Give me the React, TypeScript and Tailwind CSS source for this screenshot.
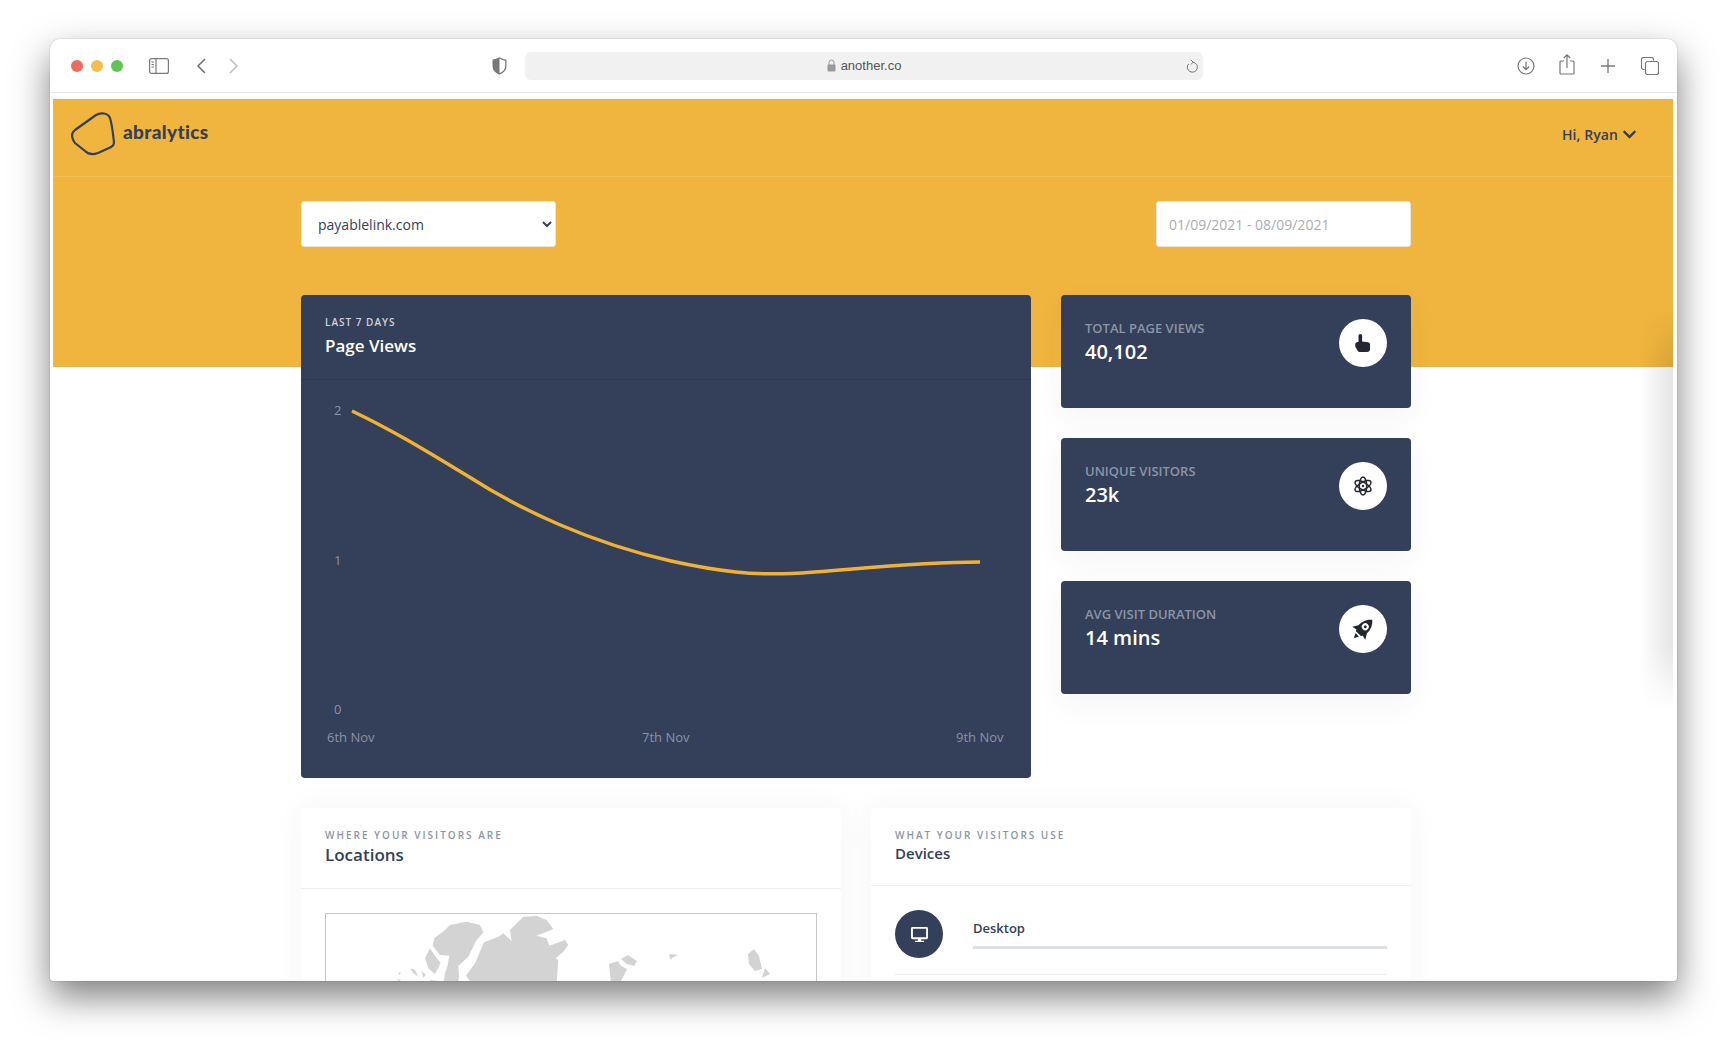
import { FaChevronDown, FaDesktop } from "react-icons/fa";
import type { ReactNode } from "react";

const FONT = "font-['Open_Sans',sans-serif]";

function ToolbarIcons() {
  return (
    <div className="flex h-[54px] items-center border-b border-[#e6e6e6] bg-white">
      <div className="ml-[21px] flex gap-2">
        <span className="h-3 w-3 rounded-full bg-[#ee6a5f]" />
        <span className="h-3 w-3 rounded-full bg-[#f5bd4f]" />
        <span className="h-3 w-3 rounded-full bg-[#61c454]" />
      </div>
      <svg className="ml-[26px]" width="20" height="16" viewBox="0 0 20 16" fill="none" stroke="#7a7a7a" strokeWidth="1.2">
        <rect x="0.6" y="0.6" width="18.8" height="14.8" rx="2" />
        <path d="M7 1v14M2.5 4h2.5M2.5 6.5h2.5M2.5 9h2.5" />
      </svg>
      <svg className="ml-[27px]" width="10" height="16" viewBox="0 0 10 16" fill="none" stroke="#6f6f6f" strokeWidth="1.5">
        <path d="M9 1 2 8l7 7" />
      </svg>
      <svg className="ml-[23px]" width="10" height="16" viewBox="0 0 10 16" fill="none" stroke="#bdbdbd" strokeWidth="1.5">
        <path d="m1 1 7 7-7 7" />
      </svg>
      <svg className="ml-[253px]" width="15" height="18" viewBox="0 0 14 17">
        <path d="M7 1c2 1.2 4 1.8 6 1.900v5.600c0 3.500-2.500 6-6 7.500C3.500 14.500 1 12 1 8.500V2.900C3 2.800 5 2.200 7 1Z" fill="#fff" stroke="#777" strokeWidth="1.2" />
        <path d="M7 1C5 2.200 3 2.800 1 2.900v5.600c0 3.500 2.500 6 6 7.500Z" fill="#777" />
      </svg>
      <div className="relative ml-[18px] flex h-7 w-[678px] items-center justify-center rounded-md bg-[#f1f1f1]">
        <svg className="mr-[5px]" width="9" height="13" viewBox="0 0 9 13">
          <path d="M2 6V3.500a2.500 2.500 0 0 1 5 0V6" fill="none" stroke="#9a9a9a" strokeWidth="1" />
          <rect x="0.500" y="5.500" width="8" height="7" rx="1" fill="#9a9a9a" />
        </svg>
        <span className="font-['Liberation_Sans',sans-serif] text-[13px] text-[#555]">another.co</span>
        <svg className="absolute right-[5px] top-[7px]" width="12" height="15" viewBox="0 0 12 15" fill="none" stroke="#777" strokeWidth="1">
          <path d="M7 3.200A5 5 0 1 1 2.500 5" />
          <path d="M4.800 0.800 7.200 3.200 4.800 5.500" />
        </svg>
      </div>
      <svg className="ml-[314px]" width="18" height="18" viewBox="0 0 18 18" fill="none" stroke="#777" strokeWidth="1.200">
        <circle cx="9" cy="9" r="8" />
        <path d="M9 4.500v8M5.800 9.500 9 12.700l3.200-3.200" />
      </svg>
      <svg className="ml-[24px] -mt-[3px]" width="16" height="21" viewBox="0 0 16 21" fill="none" stroke="#777" strokeWidth="1.200">
        <path d="M5 7H2a1 1 0 0 0-1 1v11a1 1 0 0 0 1 1h12a1 1 0 0 0 1-1V8a1 1 0 0 0-1-1h-3" />
        <path d="M8 14V1M4.800 4 8 .9 11.200 4" />
      </svg>
      <svg className="ml-[26px]" width="14" height="14" viewBox="0 0 14 14" fill="none" stroke="#777" strokeWidth="1.300">
        <path d="M7 0v14M0 7h14" />
      </svg>
      <svg className="ml-[26px]" width="18" height="18" viewBox="0 0 18 18" fill="none" stroke="#777" strokeWidth="1.200">
        <path d="M3.500 12.500H2.500a2 2 0 0 1-2-2V2.500a2 2 0 0 1 2-2h8a2 2 0 0 1 2 2v1" />
        <rect x="4.500" y="4.500" width="13" height="13" rx="2" />
      </svg>
    </div>
  );
}

function Logo() {
  return (
    <div className="flex items-center">
      <svg width="44" height="44" viewBox="0 0 44 44" fill="none" stroke="#34405a" strokeWidth="2.200">
        <path d="M1.500 26C.5 23 1.500 20 4 18L25 3C30 0 37 1 39 6C41 12 42 22 43 30C43 33 41 35 38 36L27 41C22 43 17 42 14 39L4 31C3 30 2 28 1.500 26Z" />
      </svg>
      <span className="ml-[8px] -mt-[4px] font-['Lato',sans-serif] text-[19px] font-black tracking-[0.35px] text-[#34405a]">abralytics</span>
    </div>
  );
}

function HandIcon() {
  return (
    <svg width="16" height="19" viewBox="0 0 16 19" fill="#23272f">
      <path d="M3.500 1.800a1.800 1.800 0 0 1 3.600 0V7.500l6 .8a2.200 2.200 0 0 1 1.900 2.200V15a3 3 0 0 1-3 3H4.500a2 2 0 0 1-1.500-.7L.7 13.500C-.2 12 0 8.800 1.700 8.300l1.800-.5Z" />
    </svg>
  );
}

function AtomIcon() {
  return (
    <svg width="20" height="20" viewBox="0 0 20 20" fill="none" stroke="#23272f" strokeWidth="1.500">
      <ellipse cx="10" cy="10" rx="3.700" ry="9" />
      <ellipse cx="10" cy="10" rx="3.700" ry="9" transform="rotate(60 10 10)" />
      <ellipse cx="10" cy="10" rx="3.700" ry="9" transform="rotate(-60 10 10)" />
      <circle cx="10" cy="10" r="1.200" fill="#23272f" stroke="none" />
    </svg>
  );
}

function RocketIcon() {
  return (
    <svg width="26" height="26" viewBox="0 0 24 24">
      <g transform="rotate(45 12 12)">
        <path d="M12 0C16.500 3.500 17.500 8.500 17.500 12.500L20.500 17.500 16 16.500 15.500 18H8.500L8 16.500 3.500 17.500 6.500 12.500C6.500 8.500 7.500 3.500 12 0Z" fill="#23272f" />
        <circle cx="12" cy="9" r="3.200" fill="#fff" />
        <circle cx="12" cy="9" r="1.300" fill="#23272f" />
        <path d="M9.800 19.500h4.400L12 24Z" fill="#23272f" />
      </g>
    </svg>
  );
}

function PageViewsChart() {
  return (
    <svg width="730" height="398" viewBox="0 0 730 398" className={FONT}>
      <g fill="#8b93a6" fontSize="13" fontFamily="Open Sans, sans-serif">
        <text x="33" y="35">2</text>
        <text x="33" y="185">1</text>
        <text x="33" y="334">0</text>
        <text x="26" y="362">6th Nov</text>
        <text x="341" y="362">7th Nov</text>
        <text x="655" y="362">9th Nov</text>
      </g>
      <path
        d="M51 31C95 52 130 74 170 98C220 130 290 163 370 181C420 192 452 195 491 193.500C540 191 610 182 679 182"
        fill="none"
        stroke="#f0b233"
        strokeWidth="3.500"
      />
    </svg>
  );
}

function StatCard({ label, value, icon }: { label: string; value: string; icon: ReactNode }) {
  return (
    <div className="flex h-[113px] items-start justify-between rounded bg-[#343f59] p-6 shadow-[0_10px_30px_rgba(50,60,90,0.05)]">
      <div>
        <div className="text-[13px] font-semibold leading-[18px] text-[#8c94a7]">{label}</div>
        <div className="mt-px text-[20px] font-semibold leading-[28px] text-white">{value}</div>
      </div>
      <div className="flex h-12 w-12 items-center justify-center rounded-full bg-white">{icon}</div>
    </div>
  );
}

function LocationMap() {
  return (
    <div className="mt-[24px] h-[200px] border border-[#c8c8c8] bg-white">
      <svg width="490" height="120" viewBox="0 0 490 120">
        <g fill="#d3d3d3">
          <g transform="translate(64 -9) scale(0.3333)">
            <path d="M228 212 255 175 282 112 325 95 340 85 365 108 360 75 400 35 440 33 470 45 490 72 440 92 470 100 478 122 525 105 535 120 520 140 497 160 505 165 495 300H240L240 228Z" />
            <path d="M133 100 165 75 180 60 230 50 270 60 280 82 258 108 235 155 205 182 207 215 195 300H150L165 205 172 185 178 152 150 150 128 122Z" />
            <path d="M120 130 135 152 152 175 135 207 115 190 105 160Z" />
            <path d="M60 190 75 195 85 215 70 205ZM95 198 108 210 100 218ZM25 205 32 200 30 210ZM20 222 32 225 30 232ZM120 225 150 228 140 300 120 260Z" />
          </g>
          <path d="M283 50 292 47 295 52 301 55 295 67 292 90 287 90Z" />
          <path d="M295 45 302 41 311 47 308 52 301 50Z" />
          <path d="M344 40 352 41 346 44 345 46 343 42Z" />
          <path d="M422 40 428 35 433 42 436 55 429 57 423 50Z" />
          <path d="M439 54 444 60 436 64Z" />
        </g>
      </svg>
    </div>
  );
}

function SectionHead({ kicker, title, titleClass, boxClass }: { kicker: string; title: string; titleClass: string; boxClass: string }) {
  return (
    <div className={`border-b border-[#eef0f3] px-6 pt-[20px] ${boxClass}`}>
      <div className="text-[10px] font-semibold uppercase leading-[14px] tracking-[0.2em] text-[#8a96a8]">{kicker}</div>
      <div className={titleClass}>{title}</div>
    </div>
  );
}

export default function App() {
  return (
    <div className={`${FONT} h-[1040px] overflow-hidden bg-white pl-[50px] pt-[39px]`}>
      <div className="h-[942px] w-[1627px] overflow-hidden rounded-t-[10px] rounded-b-[3px] bg-white shadow-[0_16px_36px_rgba(0,0,0,0.5),0_0_1px_rgba(0,0,0,0.5)]">
        <ToolbarIcons />
        <div className="relative ml-[3px] mr-[4px] mt-[6px]">
          {/* side shadow that bleeds in from the right */}
          <div className="absolute right-0 top-[210px] h-[400px] w-[34px] bg-gradient-to-l from-black/10 to-transparent [mask-image:linear-gradient(to_bottom,transparent,black_15%,black_85%,transparent)]" />

          <div className="h-[268px] bg-[#efb53e]">
            <div className="flex h-[78px] items-start justify-between border-b border-white/10 pl-[18px] pr-[36px] pt-[13px]">
              <Logo />
              <div className="mt-[12px] flex items-center gap-1 text-[14px] font-semibold tracking-[0.1px] text-[#34405a]">
                Hi, Ryan <FaChevronDown className="text-[15px]" />
              </div>
            </div>
            <div className="ml-[248px] mt-[24px] flex w-[1110px] justify-between">
              <select className="h-[46px] w-[255px] rounded-[3px] border border-[#e4e6ea] bg-white pl-[12px] text-[14px] text-[#34405a]">
                <option>payablelink.com</option>
              </select>
              <input
                className="h-[46px] w-[255px] rounded-[3px] border border-[#e4e6ea] bg-white pl-3 text-[14px] placeholder-[#a9adb5]"
                placeholder="01/09/2021 - 08/09/2021"
              />
            </div>
          </div>

          <div className="relative ml-[248px] -mt-[72px] w-[1110px]">
            <div className="flex gap-[30px]">
              <div className="h-[483px] w-[730px] overflow-hidden rounded bg-[#343f59]">
                <div className="h-[85px] border-b border-[#2f3952] px-6 pt-[20px]">
                  <div className="text-[10px] font-semibold uppercase leading-[14px] tracking-[0.1em] text-[#cfd3db]">Last 7 Days</div>
                  <div className="mt-[5px] text-[17px] font-semibold leading-[24px] text-white">Page Views</div>
                </div>
                <PageViewsChart />
              </div>
              <div className="flex w-[350px] flex-col gap-[30px]">
                <StatCard label="TOTAL PAGE VIEWS" value="40,102" icon={<HandIcon />} />
                <StatCard label="UNIQUE VISITORS" value="23k" icon={<AtomIcon />} />
                <StatCard label="AVG VISIT DURATION" value="14 mins" icon={<RocketIcon />} />
              </div>
            </div>

            <div className="mt-[30px] flex gap-[30px]">
              <div className="h-[300px] w-[540px] rounded bg-white shadow-[0_0_30px_rgba(50,60,90,0.05)]">
                <SectionHead boxClass="h-[81px]" kicker="Where your visitors are" title="Locations" titleClass="mt-0 text-[17px] font-semibold leading-[26px] text-[#34405a]" />
                <div className="px-6">
                  <LocationMap />
                </div>
              </div>
              <div className="h-[300px] w-[540px] rounded bg-white shadow-[0_0_30px_rgba(50,60,90,0.05)]">
                <SectionHead boxClass="h-[78px]" kicker="What your visitors use" title="Devices" titleClass="mt-0 text-[15px] font-semibold leading-[22px] text-[#34405a]" />
                <div className="px-6 pt-[24px]">
                  <div className="flex h-[65px] items-start gap-[30px] border-b border-[#eceef1]">
                    <div className="flex h-12 w-12 items-center justify-center rounded-full bg-[#343f59] text-white">
                      <FaDesktop className="text-[17px]" />
                    </div>
                    <div className="flex-1">
                      <div className="mt-[8px] text-[13px] font-semibold leading-[20px] text-[#34405a]">Desktop</div>
                      <div className="mt-[8px] h-[3px] bg-[#dcdfe4]" />
                    </div>
                  </div>
                </div>
              </div>
            </div>
          </div>
        </div>
      </div>
    </div>
  );
}
